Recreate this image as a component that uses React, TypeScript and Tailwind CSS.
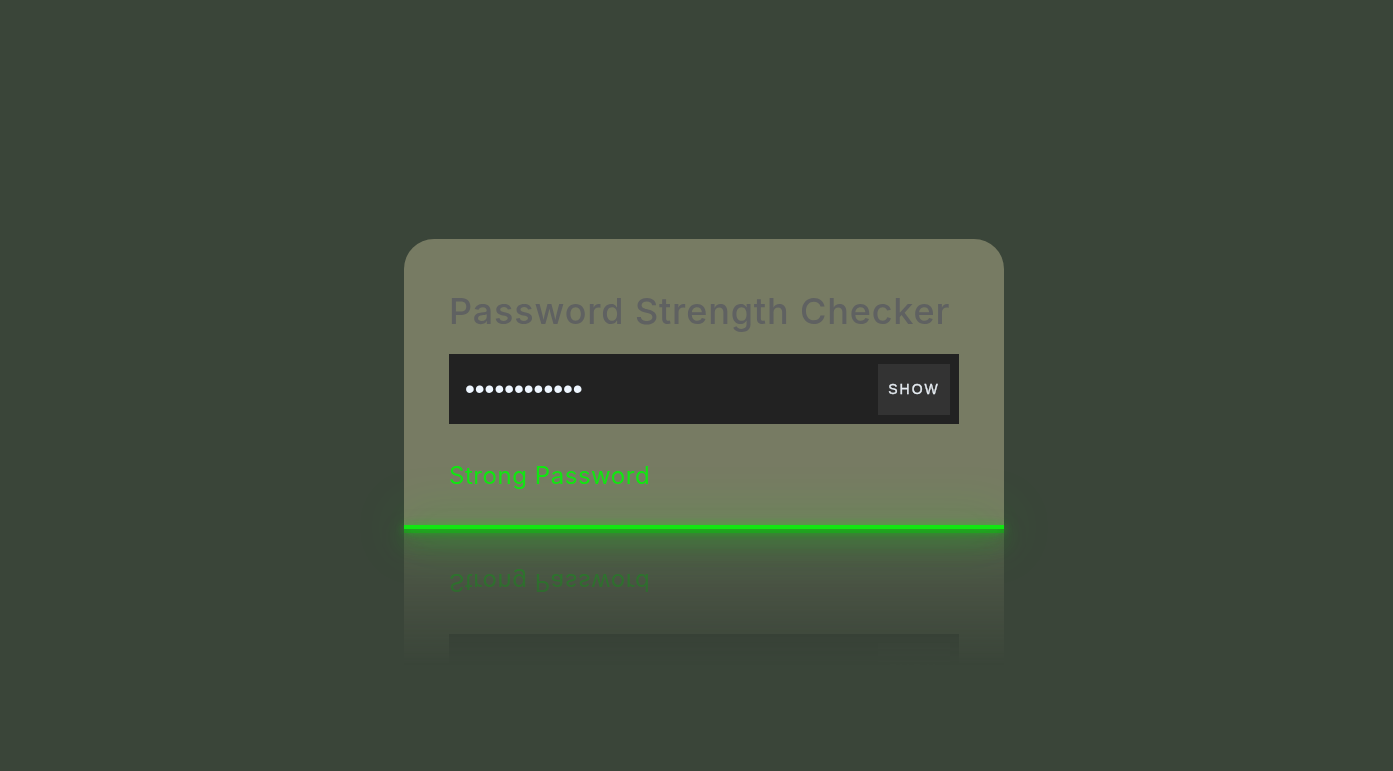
import React from "react";

export default function App() {
  return (
    <div className="flex min-h-screen w-full items-center justify-center bg-[#3a4539] pl-[15px] pb-[3px]">
      <div className="relative flex h-[290px] w-[600px] flex-col rounded-t-[30px] bg-[#777b63] px-[45px] pt-[50px] [-webkit-box-reflect:below_0_linear-gradient(transparent_53%,rgba(0,0,0,0.42))]">
        <h1 className="m-0 font-['Inter',sans-serif] text-[36px] font-medium leading-[44px] tracking-[0.85px] text-[#5f6161] whitespace-nowrap">
          Password Strength Checker
        </h1>
        <div className="mt-[21px] flex h-[70px] w-[510px] items-center justify-between bg-[#222222] pl-[16px] pr-[9px]">
          <span className="font-['Liberation_Sans',sans-serif] text-[28px] leading-none text-[#eef6ff]">
            ••••••••••••
          </span>
          <button className="flex h-[51px] w-[72px] items-center justify-center bg-[#333333] font-['Liberation_Sans',sans-serif] text-[14px] font-medium tracking-[2px] text-[#e6ecf2] [-webkit-text-stroke:0.3px_#e6ecf2]">
            SHOW
          </button>
        </div>
        <div className="mt-[37px] font-['Inter',sans-serif] text-[24px] leading-[30px] tracking-[0.55px] text-[#12e612]">
          Strong Password
        </div>
        <div className="-mx-[45px] mt-auto h-[4px] bg-[#12e612] shadow-[0_10px_22px_rgba(18,230,18,0.55),0_2px_10px_rgba(18,230,18,0.7),0_0_50px_#12e612]" />
      </div>
    </div>
  );
}
